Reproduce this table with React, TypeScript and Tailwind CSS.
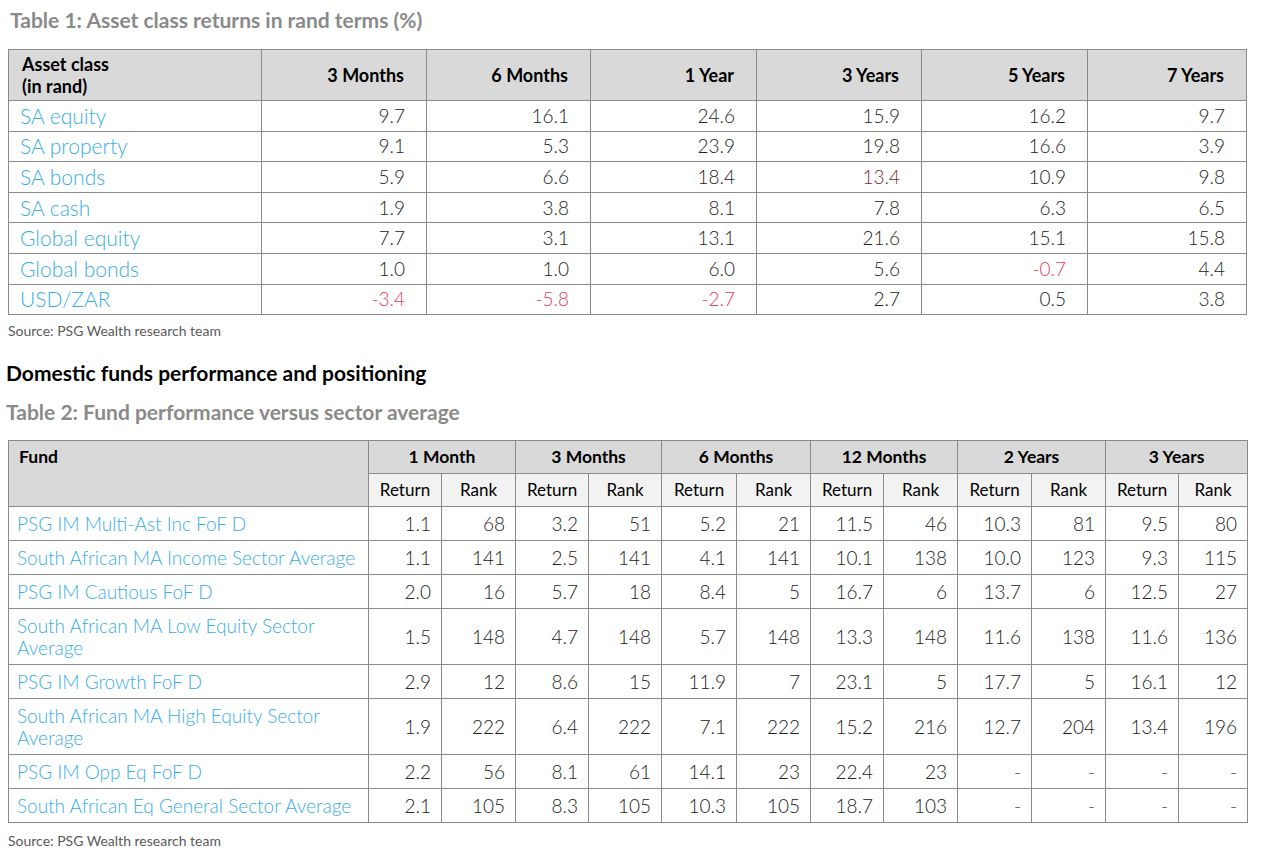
const blue = "text-[#38adea]";

type Cell = { v: string; c?: string };

const t1Cols = ["3 Months", "6 Months", "1 Year", "3 Years", "5 Years", "7 Years"];
const t1Widths = ["w-[253px]", "w-[165px]", "w-[164px]", "w-[166px]", "w-[165px]", "w-[166px]", "w-[159px]"];

const red = "text-[#e8405a]";
const darkRed = "text-[#7a1f2e]";

const assetRows: { name: string; vals: Cell[] }[] = [
  { name: "SA equity", vals: [{ v: "9.7" }, { v: "16.1" }, { v: "24.6" }, { v: "15.9" }, { v: "16.2" }, { v: "9.7" }] },
  { name: "SA property", vals: [{ v: "9.1" }, { v: "5.3" }, { v: "23.9" }, { v: "19.8" }, { v: "16.6" }, { v: "3.9" }] },
  { name: "SA bonds", vals: [{ v: "5.9" }, { v: "6.6" }, { v: "18.4" }, { v: "13.4", c: darkRed }, { v: "10.9" }, { v: "9.8" }] },
  { name: "SA cash", vals: [{ v: "1.9" }, { v: "3.8" }, { v: "8.1" }, { v: "7.8" }, { v: "6.3" }, { v: "6.5" }] },
  { name: "Global equity", vals: [{ v: "7.7" }, { v: "3.1" }, { v: "13.1" }, { v: "21.6" }, { v: "15.1" }, { v: "15.8" }] },
  { name: "Global bonds", vals: [{ v: "1.0" }, { v: "1.0" }, { v: "6.0" }, { v: "5.6" }, { v: "-0.7", c: red }, { v: "4.4" }] },
  { name: "USD/ZAR", vals: [{ v: "-3.4", c: red }, { v: "-5.8", c: red }, { v: "-2.7", c: red }, { v: "2.7" }, { v: "0.5" }, { v: "3.8" }] },
];

const periods = ["1 Month", "3 Months", "6 Months", "12 Months", "2 Years", "3 Years"];
const t2Widths = [
  "w-[360px]",
  "w-[73px]", "w-[74px]", "w-[73px]", "w-[73px]", "w-[75px]", "w-[74px]",
  "w-[73px]", "w-[74px]", "w-[74px]", "w-[74px]", "w-[73px]", "w-[69px]",
];

const funds: { name: string[]; tall?: boolean; vals: string[] }[] = [
  { name: ["PSG IM Multi-Ast Inc FoF D"], vals: ["1.1", "68", "3.2", "51", "5.2", "21", "11.5", "46", "10.3", "81", "9.5", "80"] },
  { name: ["South African MA Income Sector Average"], vals: ["1.1", "141", "2.5", "141", "4.1", "141", "10.1", "138", "10.0", "123", "9.3", "115"] },
  { name: ["PSG IM Cautious FoF D"], vals: ["2.0", "16", "5.7", "18", "8.4", "5", "16.7", "6", "13.7", "6", "12.5", "27"] },
  { name: ["South African MA Low Equity Sector", "Average"], tall: true, vals: ["1.5", "148", "4.7", "148", "5.7", "148", "13.3", "148", "11.6", "138", "11.6", "136"] },
  { name: ["PSG IM Growth FoF D"], vals: ["2.9", "12", "8.6", "15", "11.9", "7", "23.1", "5", "17.7", "5", "16.1", "12"] },
  { name: ["South African MA High Equity Sector", "Average"], tall: true, vals: ["1.9", "222", "6.4", "222", "7.1", "222", "15.2", "216", "12.7", "204", "13.4", "196"] },
  { name: ["PSG IM Opp Eq FoF D"], vals: ["2.2", "56", "8.1", "61", "14.1", "23", "22.4", "23", "-", "-", "-", "-"] },
  { name: ["South African Eq General Sector Average"], vals: ["2.1", "105", "8.3", "105", "10.3", "105", "18.7", "103", "-", "-", "-", "-"] },
];

const line = "border border-[#8a8a8a]";

function AssetTable() {
  return (
    <table className="ml-2 w-[1238px] table-fixed border-collapse">
      <colgroup>
        {t1Widths.map((w, i) => (
          <col key={i} className={w} />
        ))}
      </colgroup>
      <thead>
        <tr className="h-[51px] bg-[#d9d9d9]">
          <th className={`${line} pl-[13px] text-left align-middle text-[18px] font-bold leading-[22px] text-black`}>
            Asset class
            <br />
            (in rand)
          </th>
          {t1Cols.map((c) => (
            <th key={c} className={`${line} pr-[22px] text-right text-[18px] font-bold text-black`}>
              {c}
            </th>
          ))}
        </tr>
      </thead>
      <tbody>
        {assetRows.map((r) => (
          <tr key={r.name} className="h-[30.6px]">
            <td className={`${line} pl-[11px] text-[21px] font-light leading-[24px] ${blue}`}>{r.name}</td>
            {r.vals.map((v, i) => (
              <td
                key={i}
                className={`${line} pr-[21px] text-right text-[19px] font-light leading-[24px] ${v.c ?? "text-[#222]"}`}
              >
                {v.v}
              </td>
            ))}
          </tr>
        ))}
      </tbody>
    </table>
  );
}

function FundTable() {
  return (
    <table className="ml-2 w-[1239px] table-fixed border-collapse">
      <colgroup>
        {t2Widths.map((w, i) => (
          <col key={i} className={w} />
        ))}
      </colgroup>
      <thead>
        <tr className="h-[33px] bg-[#d9d9d9]">
          <th rowSpan={2} className={`${line} pl-[10px] pt-[3px] text-left align-top text-[17.5px] font-bold text-black`}>
            Fund
          </th>
          {periods.map((p) => (
            <th key={p} colSpan={2} className={`${line} text-center text-[17.5px] font-bold text-black`}>
              {p}
            </th>
          ))}
        </tr>
        <tr className="h-[33px] bg-[#f2f2f2]">
          {periods.map((p) => (
            <>
              <th key={p + "r"} className={`${line} text-center text-[17px] font-normal text-black`}>
                Return
              </th>
              <th key={p + "k"} className={`${line} text-center text-[17px] font-normal text-black`}>
                Rank
              </th>
            </>
          ))}
        </tr>
      </thead>
      <tbody>
        {funds.map((f) => (
          <tr key={f.name.join(" ")} className={f.tall ? "h-[56px]" : "h-[34px]"}>
            <td className={`${line} pl-[8px] text-[19px] font-light leading-[22px] ${blue}`}>
              {f.name.map((n, i) => (
                <div key={i}>{n}</div>
              ))}
            </td>
            {f.vals.map((v, i) => (
              <td
                key={i}
                className={`${line} pr-[10px] text-right text-[19px] font-light leading-[24px] ${
                  v === "-" ? "text-[#555]" : "text-[#222]"
                }`}
              >
                {v}
              </td>
            ))}
          </tr>
        ))}
      </tbody>
    </table>
  );
}

export default function App() {
  return (
    <div className="min-h-screen w-[1262px] bg-white pt-[6px] font-['Lato',sans-serif]">
      <h2 className="pl-[10px] text-[21px] font-bold leading-[28px] text-[#8a8a8a]">
        Table 1: Asset class returns in rand terms (%)
      </h2>
      <div className="mt-[15px]">
        <AssetTable />
      </div>
      <p className="mt-[7px] pl-[8px] text-[14px] leading-[18px] text-[#5a5a5a]">Source: PSG Wealth research team</p>

      <h1 className="mt-[19px] pl-[6px] text-[21px] font-bold leading-[28px] text-black">
        Domestic funds performance and positioning
      </h1>
      <h2 className="mt-[11px] pl-[6px] text-[21px] font-bold leading-[28px] text-[#8a8a8a]">
        Table 2: Fund performance versus sector average
      </h2>
      <div className="mt-[14px]">
        <FundTable />
      </div>
      <p className="mt-[9px] pl-[8px] text-[14px] leading-[18px] text-[#5a5a5a]">Source: PSG Wealth research team</p>
    </div>
  );
}
